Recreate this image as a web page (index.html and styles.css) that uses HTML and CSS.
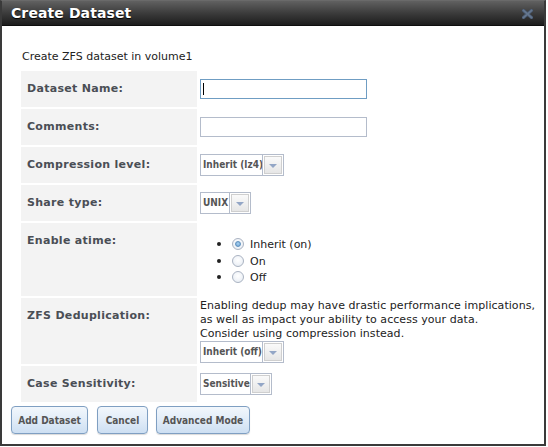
FILE: index.html
```html
<!DOCTYPE html>
<html>
<head>
<meta charset="utf-8">
<title>Create Dataset</title>
<link rel="stylesheet" href="styles.css">
</head>
<body>
<div class="dialog">
  <div class="titlebar">
    <span class="title">Create Dataset</span>
    <svg class="close" width="11" height="10" viewBox="0 0 11 10">
      <path d="M1.5 1.5 L9.5 8.5 M9.5 1.5 L1.5 8.5" stroke="#46556a" stroke-width="3.4" stroke-linecap="square"/>
      <path d="M1.5 1.5 L9.5 8.5 M9.5 1.5 L1.5 8.5" stroke="#64768e" stroke-width="1.8" stroke-linecap="square"/>
    </svg>
  </div>
  <div class="content">
    <p class="intro">Create ZFS dataset in volume1</p>
    <div class="form">
      <div class="label">Dataset Name:</div>
      <div class="value">
        <span class="field focused"><span class="caret"></span></span>
      </div>

      <div class="label">Comments:</div>
      <div class="value"><span class="field"></span></div>

      <div class="label">Compression level:</div>
      <div class="value">
        <span class="select w84"><span class="sel-text">Inherit (lz4)</span><span class="sel-btn"><span class="sel-inner"><span class="tri"></span></span></span></span>
      </div>

      <div class="label">Share type:</div>
      <div class="value">
        <span class="select w51"><span class="sel-text">UNIX</span><span class="sel-btn"><span class="sel-inner"><span class="tri"></span></span></span></span>
      </div>

      <div class="label">Enable atime:</div>
      <div class="value">
        <ul class="radios">
          <li><span class="radio checked"></span>Inherit (on)</li>
          <li><span class="radio"></span>On</li>
          <li><span class="radio"></span>Off</li>
        </ul>
      </div>

      <div class="label">ZFS Deduplication:</div>
      <div class="value stack">
        <p class="note">Enabling dedup may have drastic performance implications,<br>as well as impact your ability to access your data.<br>Consider using compression instead.</p>
        <span class="select w84"><span class="sel-text">Inherit (off)</span><span class="sel-btn"><span class="sel-inner"><span class="tri"></span></span></span></span>
      </div>

      <div class="label">Case Sensitivity:</div>
      <div class="value">
        <span class="select w72"><span class="sel-text">Sensitive</span><span class="sel-btn"><span class="sel-inner"><span class="tri"></span></span></span></span>
      </div>
    </div>
  </div>
  <div class="actions">
    <button class="btn b1">Add Dataset</button>
    <button class="btn b2">Cancel</button>
    <button class="btn b3">Advanced Mode</button>
  </div>
</div>
</body>
</html>
```

FILE: styles.css
```css
html, body {
  margin: 0;
  padding: 0;
  background: #ffffff;
}
body {
  font-family: "DejaVu Sans", sans-serif;
  font-size: 11px;
  color: #222;
}
.dialog {
  width: 546px;
  height: 446px;
  box-sizing: border-box;
  border: 2px solid #3a3a3a;
  border-top: 1px solid #6a6a6a;
  display: flex;
  flex-direction: column;
  background: #fff;
}
.titlebar {
  height: 25px;
  flex: none;
  box-sizing: border-box;
  background: linear-gradient(#616161 0%, #3c3c3c 50%, #1c1c1c 100%);
  border-bottom: 1px solid #0e0e0e;
  display: flex;
  align-items: center;
  justify-content: space-between;
  padding: 0 11px 0 9px;
}
.title {
  color: #fff;
  font-weight: bold;
  font-size: 14px;
  text-shadow: 0 1px 1px #000;
  letter-spacing: 0.1px;
}
.close {
  display: block;
  margin-top: 1px;
}
.content {
  padding: 0 0 0 19px;
}
.intro {
  margin: 24px 0 7px 1px;
  line-height: 14px;
}
.form {
  display: grid;
  grid-template-columns: 176px 1fr;
  grid-auto-rows: auto;
  row-gap: 2px;
  column-gap: 2px;
  width: 520px;
}
.label {
  background: #f3f3f3;
  padding: 11px 6px;
  line-height: 14px;
  font-weight: bold;
  color: #4a4e55;
  letter-spacing: 0.3px;
}
.value {
  padding: 1px;
  display: flex;
  align-items: center;
}
.value.stack {
  flex-direction: column;
  align-items: flex-start;
  justify-content: center;
}
.field {
  display: block;
  width: 167px;
  height: 20px;
  box-sizing: border-box;
  border: 1px solid #b4bccb;
  background: #fff;
  position: relative;
}
.field.focused {
  border-color: #6f9dc3;
}
.caret {
  position: absolute;
  left: 2px;
  top: 3px;
  width: 1px;
  height: 12px;
  background: #000;
}
.select {
  display: flex;
  height: 22px;
  box-sizing: border-box;
  border: 1px solid #b4bccb;
  background: #fff;
}
.w84 { width: 84px; }
.w51 { width: 51px; }
.w72 { width: 72px; }
.sel-text {
  flex: 1;
  padding: 0 0 0 2px;
  line-height: 20px;
  font-family: "DejaVu Sans Condensed", "DejaVu Sans", sans-serif;
  font-stretch: condensed;
  font-weight: bold;
  font-size: 10px;
  color: #555;
  white-space: nowrap;
  overflow: hidden;
}
.sel-btn {
  flex: none;
  width: 21px;
  border-left: 1px solid #b4bccb;
  box-sizing: border-box;
  padding: 1px;
  display: flex;
}
.sel-inner {
  flex: 1;
  border: 1px solid #cfcfcf;
  background: linear-gradient(#fafafa, #e6e6e6);
  display: flex;
  align-items: center;
  justify-content: center;
}
.tri {
  width: 0;
  height: 0;
  border-left: 4px solid transparent;
  border-right: 4px solid transparent;
  border-top: 4px solid #93a6c6;
  margin-top: 1px;
}
.radios {
  margin: 12px 0 9px 0;
  padding: 0 0 0 32px;
}
.radios li {
  height: 16.7px;
  line-height: 16.7px;
  display: list-item;
  list-style: disc;
}
.radios li::marker {
  font-size: 13px;
}
.radio {
  display: inline-block;
  vertical-align: -2px;
  width: 12px;
  height: 12px;
  box-sizing: border-box;
  border: 1px solid #aab3c2;
  border-radius: 50%;
  background: radial-gradient(circle at 50% 40%, #ffffff 0%, #f2f5f9 50%, #dfe6ee 100%);
  margin-right: 6px;
  position: relative;
}
.radio.checked::after {
  content: "";
  position: absolute;
  left: 2px;
  top: 2px;
  width: 6px;
  height: 6px;
  box-sizing: border-box;
  border-radius: 50%;
  background: radial-gradient(circle at 50% 40%, #a9d0ef 0%, #6aa3d4 100%);
  border: 1px solid #5d8fbd;
}
.note {
  margin: 0;
  line-height: 14px;
  color: #222;
  letter-spacing: 0.05px;
}
.actions {
  display: flex;
  gap: 8px;
  padding: 4px 0 0 9px;
}
.btn {
  height: 28px;
  box-sizing: border-box;
  border: 1px solid #7f9fc2;
  border-radius: 4px;
  background: linear-gradient(#f2f7fc 0%, #e1ecf8 50%, #cddff2 100%);
  font-family: "DejaVu Sans Condensed", "DejaVu Sans", sans-serif;
  font-stretch: condensed;
  font-weight: bold;
  font-size: 10px;
  color: #555;
  padding: 0;
  margin: 0;
  box-shadow: 0 1px 1px rgba(0,0,0,0.15);
}
.b1 { width: 77px; }
.b2 { width: 51px; margin-left: 1px; }
.b3 { width: 94px; }
```
